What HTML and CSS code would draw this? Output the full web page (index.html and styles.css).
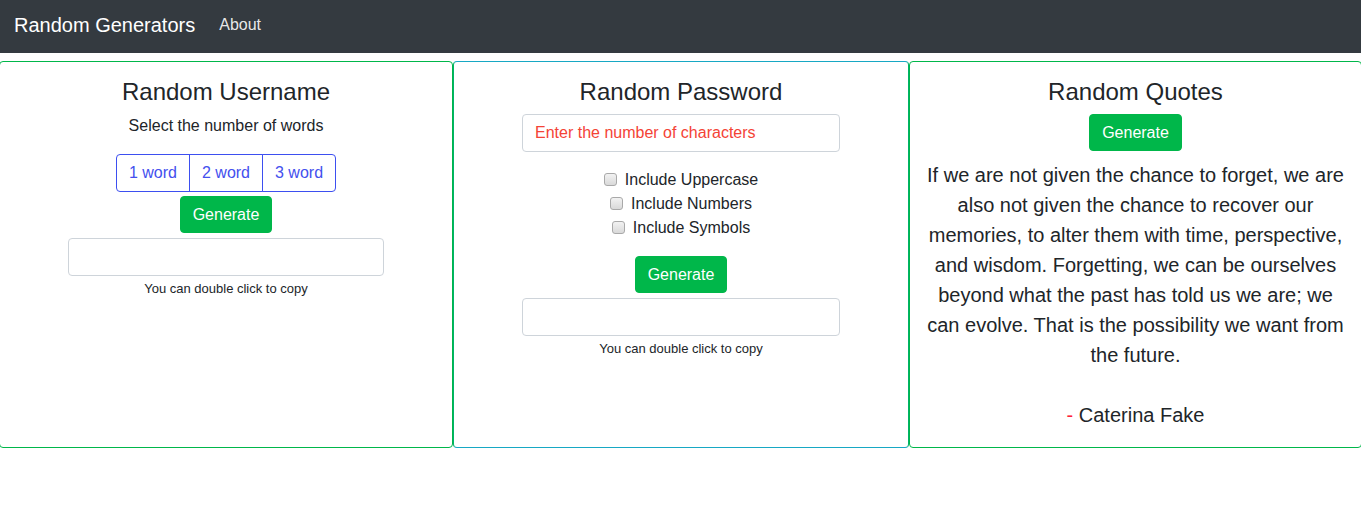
FILE: index.html
```html
<!DOCTYPE html>
<html>
<head>
<meta charset="utf-8">
<title>Random Generators</title>
<link rel="stylesheet" href="styles.css">
</head>
<body>
<nav class="navbar">
  <span class="brand">Random Generators</span>
  <a class="nav-link" href="#">About</a>
</nav>
<main class="cards">
  <section class="card card-green">
    <h3 class="title">Random Username</h3>
    <p class="subtitle">Select the number of words</p>
    <div class="btn-group">
      <button class="btn-outline">1 word</button>
      <button class="btn-outline">2 word</button>
      <button class="btn-outline">3 word</button>
    </div>
    <button class="btn-gen btn-gen-user">Generate</button>
    <input class="field field-user" type="text">
    <small class="hint">You can double click to copy</small>
  </section>
  <section class="card card-cyan">
    <h3 class="title">Random Password</h3>
    <input class="field field-pass" type="text" placeholder="Enter the number of characters">
    <div class="checks">
      <label class="check"><input type="checkbox"> Include Uppercase</label>
      <label class="check"><input type="checkbox"> Include Numbers</label>
      <label class="check"><input type="checkbox"> Include Symbols</label>
    </div>
    <button class="btn-gen btn-gen-pass">Generate</button>
    <input class="field field-out" type="text">
    <small class="hint">You can double click to copy</small>
  </section>
  <section class="card card-green">
    <h3 class="title">Random Quotes</h3>
    <button class="btn-gen">Generate</button>
    <p class="quote">If we are not given the chance to forget, we are also not given the chance to recover our memories, to alter them with time, perspective, and wisdom. Forgetting, we can be ourselves beyond what the past has told us we are; we can evolve. That is the possibility we want from the future.<br><br><span class="dash">-</span> Caterina Fake</p>
  </section>
</main>
</body>
</html>
```
FILE: styles.css
```css
* { box-sizing: border-box; }
body {
  margin: 0;
  font-family: "Liberation Sans", Arial, sans-serif;
  color: #212529;
  background: #fff;
  overflow-x: hidden;
}
.navbar {
  height: 53px;
  background: #343a40;
  display: flex;
  align-items: center;
  padding: 0 14px 2px;
}
.brand {
  font-size: 20px;
  color: #fff;
  margin-right: 16px;
}
.nav-link {
  font-size: 16px;
  color: rgba(255,255,255,0.9);
  text-decoration: none;
  padding: 0 8px;
  margin-top: -1px;
}
.cards {
  display: grid;
  grid-template-columns: 454px 456px 453px;
  margin: 8px 0 0 -1px;
}
.card {
  border: 1px solid #00b74a;
  border-radius: 4px;
  padding: 16px 16px 17px;
  display: flex;
  flex-direction: column;
  align-items: center;
  text-align: center;
}
.card-cyan {
  border-color: #17a8c4 #00b26a;
}
.title {
  font-size: 24px;
  font-weight: 500;
  line-height: 1.2;
  margin: 0 0 7px;
}
.subtitle {
  font-size: 16px;
  line-height: 24px;
  margin: 0 0 16px;
}
.btn-group {
  display: flex;
}
.btn-outline {
  font-family: inherit;
  font-size: 16px;
  line-height: 24px;
  padding: 6px 12px;
  background: #fff;
  color: #4450ee;
  border: 1px solid #3d4ff0;
  margin-left: -1px;
}
.btn-outline:first-child { border-radius: 4px 0 0 4px; margin-left: 0; }
.btn-outline:last-child { border-radius: 0 4px 4px 0; }
.btn-gen {
  font-family: inherit;
  font-size: 16px;
  line-height: 23px;
  padding: 6px 12px;
  background: #00b74a;
  color: #fff;
  border: 1px solid #00b74a;
  border-radius: 4px;
}
.btn-gen-user { margin-top: 4px; }
.btn-gen-pass { margin-top: 16px; }
.field {
  height: 38px;
  border: 1px solid #ced4da;
  border-radius: 4px;
  padding: 6px 12px;
  font-family: inherit;
  font-size: 16px;
  background: #fff;
}
.field-user { width: 316px; margin-top: 5px; }
.field-pass { width: 318px; }
.field-out { width: 318px; margin-top: 5px; }
.field::placeholder { color: #f44336; }
.hint {
  font-size: 13px;
  line-height: 18px;
  margin-top: 4px;
}
.checks {
  display: flex;
  flex-direction: column;
  align-items: center;
  margin-top: 16px;
}
.check {
  font-size: 16px;
  line-height: 24px;
  display: flex;
  align-items: center;
}
.check input {
  appearance: none;
  -webkit-appearance: none;
  width: 13px;
  height: 13px;
  margin: 0 8px 0 0;
  border: 1px solid #a9a9a9;
  border-radius: 3px;
  background: linear-gradient(#f2f2f2, #d9d9d9);
}
.quote {
  font-size: 20px;
  line-height: 30px;
  margin: 9px 0 0;
}
.dash { color: #ff1f3d; }
```
